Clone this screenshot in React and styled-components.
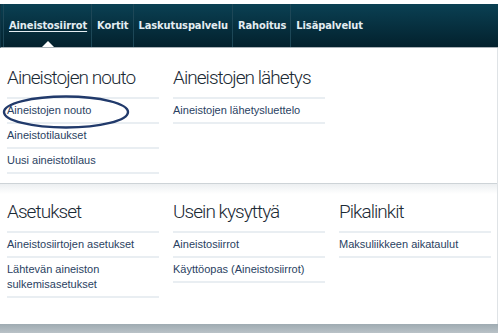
import React from "react";
import styled, { createGlobalStyle } from "styled-components";

const Global = createGlobalStyle`
  html, body {
    margin: 0;
    padding: 0;
    background: #fff;
  }
`;

const Page = styled.div`
  width: 498px;
  height: 333px;
  display: flex;
  flex-direction: column;
  background: #fff;
  padding-top: 4px;
  box-sizing: border-box;
  overflow: hidden;
`;

const NavBar = styled.nav`
  height: 43px;
  display: flex;
  align-items: stretch;
  padding-left: 2px;
  background: linear-gradient(#0a4053, #03212d);
  border-bottom: 1px solid #a9b2b8;
  border-left: 1px solid #0e3545;
`;

const NavItem = styled.a`
  position: relative;
  display: flex;
  align-items: center;
  padding: 0 4px 0 5px;
  border-left: 1px solid #1d4757;
  font-family: "DejaVu Sans Condensed", "DejaVu Sans", sans-serif;
  font-weight: bold;
  font-size: 11px;
  color: #e3edf2;
  text-decoration: ${(p) => (p.$active ? "underline" : "none")};
  text-underline-offset: 2px;
  letter-spacing: -0.1px;
  &::after {
    content: "";
    display: ${(p) => (p.$active ? "block" : "none")};
    position: absolute;
    left: 50%;
    bottom: 0;
    margin-left: -6px;
    border-left: 6px solid transparent;
    border-right: 6px solid transparent;
    border-bottom: 6px solid #fff;
  }
`;

const Panel = styled.div`
  flex: 1;
  display: flex;
  flex-direction: column;
  border-right: 1px solid #dfe3e6;
`;

const Section = styled.section`
  display: grid;
  grid-template-columns: repeat(3, 152px);
  column-gap: 14px;
  padding: ${(p) => (p.$second ? "9px 0 10px" : "11px 0 9px")} 7px;
  ${(p) =>
    p.$second &&
    `
    flex: 1;
    border-top: 1px solid #cdd3d7;
    background: linear-gradient(#eceff1, #fff 10px);
  `}
`;

const Column = styled.div`
  position: relative;
  display: flex;
  flex-direction: column;
`;

const Heading = styled.h2`
  margin: 0;
  height: 40px;
  display: flex;
  align-items: center;
  padding-bottom: 2px;
  box-sizing: border-box;
  font-family: Roboto, "Open Sans", sans-serif;
  font-weight: 300;
  font-size: 19px;
  letter-spacing: -0.95px;
  color: #1b2a35;
  border-bottom: 2px solid #e9eef2;
`;

const LinkRow = styled.a`
  display: flex;
  align-items: center;
  min-height: 23px;
  padding: ${(p) => (p.$multi ? "4px 0" : "0")};
  font-family: "Liberation Sans", Arial, sans-serif;
  font-size: 11px;
  line-height: 15px;
  color: #2a3f62;
  text-decoration: none;
  border-bottom: 2px solid #e9eef2;
`;

const Circle = styled.svg`
  position: absolute;
  left: -5px;
  top: 36px;
  pointer-events: none;
`;

const nav = ["Aineistosiirrot", "Kortit", "Laskutuspalvelu", "Rahoitus", "Lisäpalvelut"];

const top = [
  { title: "Aineistojen nouto", links: ["Aineistojen nouto", "Aineistotilaukset", "Uusi aineistotilaus"], circled: true },
  { title: "Aineistojen lähetys", links: ["Aineistojen lähetysluettelo"] },
];

const bottom = [
  { title: "Asetukset", links: ["Aineistosiirtojen asetukset", "Lähtevän aineiston sulkemisasetukset"] },
  { title: "Usein kysyttyä", links: ["Aineistosiirrot", "Käyttöopas (Aineistosiirrot)"] },
  { title: "Pikalinkit", links: ["Maksuliikkeen aikataulut"] },
];

const Footer = styled.div`
  height: 9px;
  background: linear-gradient(#9fabb2, #b9c2c7);
`;

const renderColumn = (c) => (
  <Column key={c.title}>
    <Heading>{c.title}</Heading>
    {c.links.map((l) => (
      <LinkRow key={l} $multi={l.length > 30}>
        {l}
      </LinkRow>
    ))}
    {c.circled && (
      <Circle width="128" height="34" viewBox="0 0 128 34">
        <ellipse cx="64" cy="17" rx="62" ry="15.5" fill="none" stroke="#213a6b" strokeWidth="2.4" />
      </Circle>
    )}
  </Column>
);

export default function App() {
  return (
    <Page>
      <Global />
      <NavBar>
        {nav.map((n, i) => (
          <NavItem key={n} $active={i === 0}>
            {n}
          </NavItem>
        ))}
      </NavBar>
      <Panel>
        <Section>{top.map(renderColumn)}</Section>
        <Section $second>{bottom.map(renderColumn)}</Section>
      </Panel>
      <Footer />
    </Page>
  );
}
